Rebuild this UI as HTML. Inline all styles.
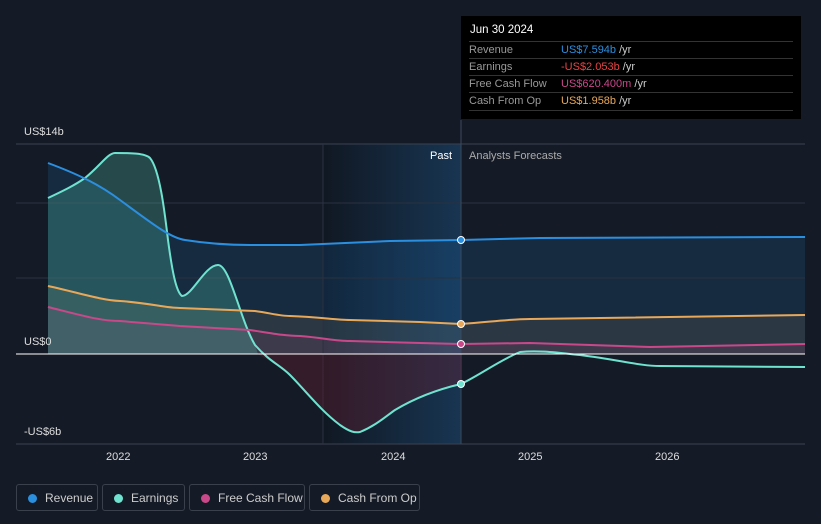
<!DOCTYPE html>
<html><head><style>
body{margin:0;background:#151b26;font-family:"Liberation Sans",sans-serif;}
.w{position:relative;width:821px;height:524px;overflow:hidden;}
.tt{position:absolute;left:461px;top:16px;width:340px;height:103px;background:#000;color:#fff;font-size:11px;}
.tt .h{position:absolute;left:9px;top:8px;font-size:11.5px;}
.row{position:absolute;left:8px;width:324px;border-top:1px solid #333;height:17px;line-height:17px;color:#999;}
.row span{position:absolute;left:92px;}
.lg{position:absolute;top:484px;height:27px;border:1px solid #3a404c;border-radius:3px;color:#ccc;font-size:12px;line-height:27px;box-sizing:border-box;}
.lg i{position:absolute;left:11px;top:9px;width:9px;height:9px;border-radius:50%;}
.lg b{font-weight:normal;position:absolute;left:28px;}
.ax{position:absolute;color:#ddd;font-size:11px;}
</style></head><body><div class="w">
<svg width="821" height="524" style="position:absolute;left:0;top:0">
<defs><linearGradient id="pg" x1="0" x2="1"><stop offset="0" stop-color="#0d1520" stop-opacity=".6"/><stop offset="1" stop-color="#1a4a75" stop-opacity=".55"/></linearGradient></defs>
<rect x="323" y="144" width="138" height="300" fill="url(#pg)"/>
<path d="M48,163 C80,175 100,185 120,200 C150,222 170,238 185,240 C210,244 230,245 250,245 L300,245 C340,243 370,242 390,241 L461,240 L540,238 L805,237 L805,354 L48,354Z" fill="#1d6fb8" fill-opacity=".18"/>
<path d="M48,286 C80,293 100,300 120,301 C150,303 165,308 180,308 L255,311 C270,313 280,316 290,316 C320,317 335,320 350,320 L420,322 L461,324 C490,322 510,319 530,319 L805,315 L805,354 L48,354Z" fill="#8a7a5a" fill-opacity=".18"/>
<path d="M48,307 C80,315 100,321 120,321 L180,326 L250,330 C270,333 285,336 300,336 C325,338 335,341 350,341 L420,343 L461,344 L530,343 L650,347 L805,344 L805,354 L48,354Z" fill="#c9488a" fill-opacity=".12"/>
<g stroke="#2a3140" stroke-width="1"><line x1="16" y1="144" x2="805" y2="144" stroke="#3a4150"/><line x1="16" y1="203" x2="805" y2="203"/><line x1="16" y1="278" x2="805" y2="278"/><line x1="16" y1="444" x2="805" y2="444" stroke="#3a4150"/><line x1="323" y1="144" x2="323" y2="444"/></g>
<line x1="461" y1="120" x2="461" y2="444" stroke="#3a4a5c"/>
<path d="M48,198 C65,190 75,185 85,178 C100,166 108,153 115,153 C130,153 145,153 150,158 C160,170 165,215 168,240 C172,270 176,292 182,296 C192,296 205,265 218,265 C230,265 240,320 255,345 L258,354 L48,354Z" fill="#4fb8a6" fill-opacity=".3"/>
<path d="M258,354 C270,362 280,365 290,375 C305,390 320,410 340,425 C350,432 355,433 360,432 C375,426 385,417 395,410 C415,398 435,390 461,384 L461,354Z" fill="#5a2030" fill-opacity=".45"/>
<path d="M48,198 C65,190 75,185 85,178 C100,166 108,153 115,153 C130,153 145,153 150,158 C160,170 165,215 168,240 C172,270 176,292 182,296 C192,296 205,265 218,265 C230,265 240,320 255,345 C270,362 280,365 290,375 C305,390 320,410 340,425 C350,432 355,433 360,432 C375,426 385,417 395,410 C415,398 435,390 461,384 C480,375 500,360 520,352 C540,350 560,353 580,355 C620,360 640,366 660,366 L805,367" fill="none" stroke="#6fe3d0" stroke-width="2"/>
<path d="M48,286 C80,293 100,300 120,301 C150,303 165,308 180,308 L255,311 C270,313 280,316 290,316 C320,317 335,320 350,320 L420,322 L461,324 C490,322 510,319 530,319 L805,315" fill="none" stroke="#e8a85a" stroke-width="2"/>
<path d="M48,307 C80,315 100,321 120,321 L180,326 L250,330 C270,333 285,336 300,336 C325,338 335,341 350,341 L420,343 L461,344 L530,343 L650,347 L805,344" fill="none" stroke="#c9488a" stroke-width="2"/>
<path d="M48,163 C80,175 100,185 120,200 C150,222 170,238 185,240 C210,244 230,245 250,245 L300,245 C340,243 370,242 390,241 L461,240 L540,238 L805,237" fill="none" stroke="#2b8fe0" stroke-width="2"/>
<line x1="16" y1="354" x2="805" y2="354" stroke="#fff" stroke-width="1"/>
<g stroke="#fff" stroke-width="1"><circle cx="461" cy="240" r="3.5" fill="#2b8fe0"/><circle cx="461" cy="324" r="3.5" fill="#e8a85a"/><circle cx="461" cy="344" r="3.5" fill="#c9488a"/><circle cx="461" cy="384" r="3.5" fill="#6fe3d0"/></g>
</svg>
<div class="ax" style="left:24px;top:126px">US$14b</div>
<div class="ax" style="left:24px;top:336px">US$0</div>
<div class="ax" style="left:24px;top:426px">-US$6b</div>
<div class="ax" style="left:430px;top:150px;color:#fff">Past</div>
<div class="ax" style="left:469px;top:150px;color:#aaa">Analysts Forecasts</div>
<div class="ax" style="left:106px;top:451px">2022</div>
<div class="ax" style="left:243px;top:451px">2023</div>
<div class="ax" style="left:381px;top:451px">2024</div>
<div class="ax" style="left:518px;top:451px">2025</div>
<div class="ax" style="left:655px;top:451px">2026</div>
<div class="tt"><div class="h">Jun 30 2024</div>
<div class="row" style="top:25px">Revenue<span style="color:#2b8fe0">US$7.594b <em style="font-style:normal;color:#ccc">/yr</em></span></div>
<div class="row" style="top:42px">Earnings<span style="color:#e84545">-US$2.053b <em style="font-style:normal;color:#ccc">/yr</em></span></div>
<div class="row" style="top:59px">Free Cash Flow<span style="color:#c9488a">US$620.400m <em style="font-style:normal;color:#ccc">/yr</em></span></div>
<div class="row" style="top:76px">Cash From Op<span style="color:#e8a85a">US$1.958b <em style="font-style:normal;color:#ccc">/yr</em></span></div>
<div class="row" style="top:94px;height:0"></div>
</div>
<div class="lg" style="left:16px;width:82px"><i style="background:#2b8fe0"></i><b>Revenue</b></div>
<div class="lg" style="left:102px;width:83px"><i style="background:#6fe3d0"></i><b>Earnings</b></div>
<div class="lg" style="left:189px;width:116px"><i style="background:#c9488a"></i><b>Free Cash Flow</b></div>
<div class="lg" style="left:309px;width:111px"><i style="background:#e8a85a"></i><b>Cash From Op</b></div>
</div></body></html>
